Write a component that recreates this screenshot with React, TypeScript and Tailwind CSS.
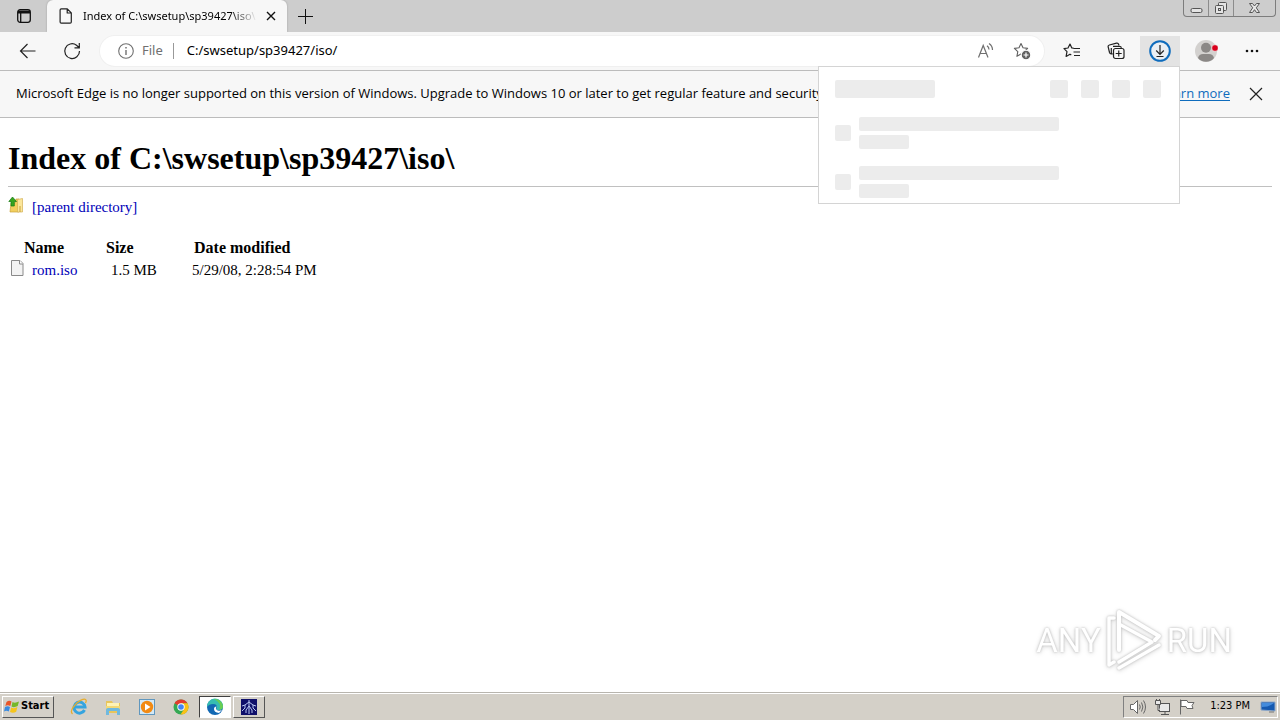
import type { ReactNode } from "react";

function ToolButton({ label, children, className = "" }: { label: string; children: ReactNode; className?: string }) {
  return (
    <button type="button" aria-label={label} className={`flex h-[30px] w-10 shrink-0 items-center justify-center ${className}`}>
      {children}
    </button>
  );
}

function WindowControls() {
  return (
    <div className="mr-1 flex h-[17px] rounded-b-sm border border-t-0 border-[#7d7d7d] text-[#555]">
      <button type="button" aria-label="Minimize" className="flex w-[25px] items-center justify-center border-r border-[#8c8c8c]">
        <svg width="13" height="16" viewBox="0 0 13 16" fill="#e4e4e4" stroke="currentColor">
          <rect x="1" y="8.5" width="11" height="4" rx="1.5" />
        </svg>
      </button>
      <button type="button" aria-label="Restore" className="flex w-[25px] items-center justify-center border-r border-[#8c8c8c]">
        <svg width="14" height="16" viewBox="0 0 14 16" fill="#e4e4e4" stroke="currentColor">
          <rect x="4.5" y="2.5" width="8" height="8" rx="1" />
          <rect x="1.5" y="5.5" width="8" height="8" rx="1" />
          <rect x="4.5" y="8.5" width="2" height="2" />
        </svg>
      </button>
      <button type="button" aria-label="Close window" className="flex w-[41px] items-center justify-center">
        <svg width="13" height="16" viewBox="0 0 13 16" fill="#e8e8e8" stroke="currentColor">
          <path d="M1.5 3.5h3l2 2.5 2-2.5h3l-3.200 4.300 3.200 4.700h-3l-2-2.800-2 2.800h-3l3.200-4.700z" strokeLinejoin="round" />
        </svg>
      </button>
    </div>
  );
}

function TabStrip() {
  return (
    <div className="flex h-8 bg-[#cdcdcd]">
      <button type="button" aria-label="Tab actions" className="flex w-[47px] items-center justify-center">
        <svg width="16" height="16" viewBox="0 0 16 16" fill="none" stroke="#111" strokeWidth="1.300">
          <rect x="1.700" y="1.700" width="12.600" height="12.600" rx="2.500" />
          <path d="M2 3.500h12M2 4.400h12" strokeWidth="2.200" />
          <path d="M4.700 5v9" />
        </svg>
      </button>
      <div className="flex w-60 items-center rounded-t-md bg-[#f7f7f7] pl-3 shadow-[0_0_2px_#999]">
        <svg width="14" height="16" viewBox="0 0 14 16" fill="none" stroke="#222" strokeWidth="1.200" strokeLinejoin="round">
          <path d="M2.300.8h6l4 4v9.200a1.200 1.200 0 0 1-1.200 1.200H2.300a1.200 1.200 0 0 1-1.200-1.200V2A1.200 1.200 0 0 1 2.300.8zM8.200 1v4h4" />
        </svg>
        <span className="ml-2.5 w-[174px] overflow-hidden whitespace-nowrap text-[11px] [mask-image:linear-gradient(to_right,black_85%,transparent)]">
          Index of C:\swsetup\sp39427\iso\
        </span>
        <button type="button" aria-label="Close tab" className="ml-1 flex size-5 items-center justify-center">
          <svg width="10" height="10" viewBox="0 0 10 10" stroke="#111" strokeWidth="1.400"><path d="M1 1l8 8M9 1l-8 8" /></svg>
        </button>
      </div>
      <button type="button" aria-label="New tab" className="flex w-9 items-center justify-center">
        <svg width="15" height="15" viewBox="0 0 15 15" stroke="#111" strokeWidth="1"><path d="M7.500 0v15M0 7.500h15" /></svg>
      </button>
      <div className="flex-1" />
      <WindowControls />
    </div>
  );
}

function PlaceholderRow() {
  return (
    <div className="flex h-[49px] gap-2">
      <div className="mt-2 size-4 rounded-xs bg-[#ececec]" />
      <div className="flex flex-col gap-1">
        <div className="h-3.5 w-[200px] rounded-xs bg-[#ececec]" />
        <div className="h-3.5 w-[50px] rounded-xs bg-[#ececec]" />
      </div>
    </div>
  );
}

function DownloadsFlyout() {
  return (
    <div className="absolute right-0 top-full z-10 h-[138px] w-[362px] overflow-hidden border border-[#d4d4d4] bg-white px-4 pt-[13px]">
      <div className="flex pr-0.5">
        <div className="h-[18px] w-[100px] rounded-xs bg-[#ececec]" />
        <div className="ml-auto flex gap-[13px]">
          {[0, 1, 2, 3].map((i) => <div key={i} className="size-[18px] rounded-xs bg-[#ececec]" />)}
        </div>
      </div>
      <div className="mt-[19px]">
        <PlaceholderRow />
        <PlaceholderRow />
      </div>
    </div>
  );
}

const star = "M8 1.500l2 4.300 4.600.6-3.400 3.200.9 4.700L8 12l-4.100 2.300.9-4.700L1.400 6.400 6 5.800z";

function Toolbar() {
  return (
    <div className="flex h-[38px] bg-[#f7f7f7] px-2 pt-1">
      <ToolButton label="Back">
        <svg width="18" height="16" viewBox="0 0 18 16" fill="none" stroke="#222" strokeWidth="1.200"><path d="M16.500 8H1.500M8.500 1L1.500 8l7 7" /></svg>
      </ToolButton>
      <ToolButton label="Refresh" className="ml-1">
        <svg width="18" height="18" viewBox="0 0 18 18" fill="none" stroke="#222" strokeWidth="1.200"><path d="M16.500 9A7.400 7.400 0 1 1 13.500 3.200L16 5.500M16.300 1v4.800h-4.800" /></svg>
      </ToolButton>
      <div className="ml-2 flex h-[30px] min-w-0 flex-1 items-center rounded-full bg-white pl-[18px] pr-2.5 ring-1 ring-[#f0f0f0]">
        <svg width="16" height="16" viewBox="0 0 16 16" fill="none" stroke="#707070" strokeWidth="1.100">
          <circle cx="8" cy="8" r="7.300" /><path d="M8 7v5" strokeWidth="1.400" /><path d="M8 4v1.500" strokeWidth="1.500" />
        </svg>
        <label htmlFor="address" className="ml-2 text-[13px] text-[#707070]">File</label>
        <div className="ml-2.5 h-4 w-px bg-[#999]" />
        <input id="address" type="text" defaultValue="C:/swsetup/sp39427/iso/" className="ml-[13px] min-w-0 flex-1 bg-transparent text-[13px] outline-none" />
        <button type="button" aria-label="Read aloud" className="flex w-6 justify-center">
          <svg width="18" height="18" viewBox="0 0 18 18" fill="none" stroke="#707070" strokeWidth="1.200">
            <path d="M1.500 15.500l4.700-12 4.800 12M3 11.500h6.500M10 3.800q2 1.400 2 3.700M12 1.500q3.500 2.300 3.500 6.500" />
          </svg>
        </button>
        <button type="button" aria-label="Add to favorites" className="ml-3 flex w-6 justify-center">
          <svg width="18" height="18" viewBox="0 0 18 18" fill="none" stroke="#606060" strokeWidth="1.100">
            <path d={star} strokeLinejoin="round" />
            <circle cx="13" cy="13" r="4.800" fill="#606060" stroke="#fff" />
            <path d="M13 10.500v5M10.500 13h5" stroke="#fff" strokeWidth="1.200" />
          </svg>
        </button>
      </div>
      <ToolButton label="Favorites" className="ml-2">
        <svg width="18" height="18" viewBox="0 0 18 18" fill="none" stroke="#222" strokeWidth="1.200" strokeLinejoin="round">
          <path d="M10.500 6.200L8.800 5.900 7 2 5 6 1 6.600l3 3-.9 4.800 3.900-2.200 1.300.8M10.500 6.500H17M10.500 10H17M11 13.500h6" />
        </svg>
      </ToolButton>
      <ToolButton label="Collections" className="ml-1">
        <svg width="18" height="18" viewBox="0 0 18 18" fill="none" stroke="#222" strokeWidth="1.200">
          <rect x="6.500" y="6.500" width="10.500" height="10" rx="2" fill="#f7f7f7" />
          <path d="M11.750 8.500v6M8.700 11.500h6M4.500 11.800Q3 12 2.500 10.500L1.200 5Q.8 3.400 2.400 3l7.100-1.900q1.600-.4 2.100 1.200l.3 1M4.300 6v4.500q0 1.500 1.500 1.500M6 4.300h6.500q1.500 0 2 1.500" />
        </svg>
      </ToolButton>
      <div className="relative ml-1 h-[30px]">
        <ToolButton label="Downloads" className="bg-[#e3e3e3]">
          <svg width="22" height="22" viewBox="0 0 22 22" fill="none" stroke="#222" strokeWidth="1.200">
            <circle cx="11" cy="11" r="9.800" fill="#eaeff4" stroke="#0f6cbd" strokeWidth="2" />
            <path d="M11 5v9M7.200 10.500L11 14.300l3.800-3.800M7.500 16.500h7" />
          </svg>
        </ToolButton>
        <DownloadsFlyout />
      </div>
      <ToolButton label="Profile" className="ml-1.5">
        <svg width="24" height="24" viewBox="0 0 24 24">
          <circle cx="12" cy="12" r="11" fill="#d3d1cf" />
          <circle cx="12" cy="8.800" r="5" fill="#8b8886" />
          <path d="M4 19q1-4 5-4h6q4 0 5 4-3 3.800-8 3.800T4 19z" fill="#8b8886" />
          <circle cx="21" cy="9" r="3.300" fill="#d9001b" stroke="#f7f7f7" strokeWidth=".6" />
        </svg>
      </ToolButton>
      <ToolButton label="Settings and more" className="ml-1.5">
        <svg width="16" height="4" viewBox="0 0 16 4" fill="#111"><circle cx="3" cy="2" r="1.300" /><circle cx="8" cy="2" r="1.300" /><circle cx="13" cy="2" r="1.300" /></svg>
      </ToolButton>
    </div>
  );
}

function Banner() {
  return (
    <div className="flex h-12 items-center border-y border-[#bcbcbc] bg-[#f7f7f7] px-4 font-['Open_Sans',sans-serif] text-[13px]">
      <p className="whitespace-nowrap">
        Microsoft Edge is no longer supported on this version of Windows. Upgrade to Windows 10 or later to get regular feature and security updates
      </p>
      <a href="#learn" className="ml-auto text-[#0f6cbd] underline underline-offset-2">Learn more</a>
      <button type="button" aria-label="Dismiss" className="ml-[18px] flex w-4 justify-center">
        <svg width="14" height="14" viewBox="0 0 14 14" stroke="#222" strokeWidth="1.200"><path d="M1 1l12 12M13 1L1 13" /></svg>
      </button>
    </div>
  );
}

function Listing() {
  return (
    <main className="flex-1 px-2 pt-[22px] font-['Liberation_Serif',serif] text-[15px] text-black">
      <h1 className="text-[32px] font-bold leading-9">Index of C:\swsetup\sp39427\iso\</h1>
      <hr className="mt-2.5 border-[#c0c0c0]" />
      <a href="#parent" className="mt-2.5 flex h-5 items-center gap-2 text-[#0000b8]">
        <svg className="mb-1" width="16" height="18" viewBox="0 0 16 18">
          <path d="M3 7h4l1-4h3v13H2z" fill="#f2cf5e" stroke="#c9a23b" strokeWidth=".7" />
          <path d="M9.500 3.500l5-1V16h-5z" fill="#fbe69a" stroke="#d3b055" strokeWidth=".7" />
          <path d="M12 10v6" stroke="#c9a23b" />
          <path d="M4.500 1l4 4.500H6.300V10H3V5.500H.8z" fill="#35a51f" stroke="#157811" strokeWidth=".7" />
        </svg>
        [parent directory]
      </a>
      <table className="mt-5 border-collapse text-left leading-[22px]">
        <thead>
          <tr className="text-base leading-[22px]">
            <th className="w-[98px] pl-4">Name</th>
            <th className="w-[86px]">Size</th>
            <th className="pl-0.5">Date modified</th>
          </tr>
        </thead>
        <tbody>
          <tr>
            <td>
              <a href="#rom" className="flex items-center gap-2 text-[#0000b8]">
                <svg className="mb-1" width="16" height="16" viewBox="0 0 16 16">
                  <path d="M3.500.5H12l3 3v12H3.500z" fill="#f3f3f3" stroke="#8a8a8a" /><path d="M11.500.5v3.500H15" fill="#fff" stroke="#8a8a8a" />
                </svg>
                rom.iso
              </a>
            </td>
            <td className="pl-[5px]">1.5 MB</td>
            <td>5/29/08, 2:28:54 PM</td>
          </tr>
        </tbody>
      </table>
    </main>
  );
}

function Watermark() {
  return (
    <div className="absolute bottom-12 right-12 flex items-center gap-1 font-[Roboto,sans-serif] text-[33px] leading-none text-white [filter:drop-shadow(0_0_1px_#bbb)_drop-shadow(0_1px_2px_#ddd)]">
      <span>ANY</span>
      <svg width="58" height="64" viewBox="0 0 58 64" fill="none" stroke="#fff" strokeWidth="4" strokeLinejoin="round" strokeLinecap="round">
        <path d="M14 42V4l40 24-4 4" />
        <path d="M9 10H4v47l5-3M14 16l33 18L14 54M14 60l40-23" strokeWidth="3.500" />
      </svg>
      <span>RUN</span>
    </div>
  );
}

const raised = "border border-t-white border-l-white border-b-[#555] border-r-[#555] bg-[#d4d0c8]";

function Task({ label, children, className = "" }: { label: string; children: ReactNode; className?: string }) {
  return (
    <button type="button" aria-label={label} className={`flex h-[22px] w-8 items-center justify-center ${className}`}>
      {children}
    </button>
  );
}

function Taskbar() {
  return (
    <footer className="flex h-7 items-center border-t border-[#b8b5ae] bg-[#d4d0c8] pl-0.5 pr-0.5 shadow-[inset_0_1px_white]">
      <button type="button" className={`flex h-[22px] w-[52px] items-center gap-px pl-px font-['DejaVu_Sans_Condensed','DejaVu_Sans',sans-serif] text-[11px] font-bold ${raised}`}>
        <svg width="16" height="16" viewBox="0 0 16 16">
          <path d="M2.500 3q2.500-2 5-.5L6.300 7q-2.500-1.500-5 0z" fill="#e8562a" />
          <path d="M8.500 3q2.500 1.500 6.500-.5L13.700 7q-3.500 2-6.200.5z" fill="#76b82a" />
          <path d="M1 8q2.700-1.500 5 0l-1.200 4.500q-2.500-1.500-4.800 0z" fill="#3a8be0" />
          <path d="M7.200 8.500q3 1.500 6.200-.5l-1.200 4.700q-3 2-6.200.3z" fill="#f6c51c" />
        </svg>
        Start
      </button>
      <div className="ml-[9px] flex gap-0.5">
        <Task label="Internet Explorer">
          <svg width="18" height="18" viewBox="0 0 18 18" fill="none">
            <path d="M14.500 12A5.500 5.500 0 1 1 15 9H5" stroke="#35a4df" strokeWidth="3" />
            <path d="M2.500 16C-1 13 5 5 11 2.200c5-2.400 6 0 4.500 2.800" stroke="#e7ad2b" strokeWidth="1.300" />
          </svg>
        </Task>
        <Task label="Windows Explorer">
          <svg width="18" height="18" viewBox="0 0 18 18">
            <path d="M2 3h6l1 2h7v10H2z" fill="#e8c55b" /><path d="M3 5h12v5H3z" fill="#fff3b5" />
            <path d="M2 8h14v3H2z" fill="#f3d976" /><path d="M2 17v-5q0-2 2-2h10q2 0 2 2v5h-3v-4H5v4z" fill="#70b9df" />
          </svg>
        </Task>
        <Task label="Media Player">
          <svg width="18" height="18" viewBox="0 0 18 18">
            <rect x="1.500" y="1.500" width="15" height="15" fill="#d3e9f7" stroke="#6097be" />
            <circle cx="9" cy="9" r="6.200" fill="#f28a13" /><path d="M7 5.500v7L12.500 9z" fill="#fff" />
          </svg>
        </Task>
        <Task label="Chrome">
          <svg width="16" height="16" viewBox="0 0 16 16">
            <circle cx="8" cy="8" r="7.500" fill="#35a853" />
            <path d="M8 8L1.500 4.200A7.500 7.500 0 0 1 14.500 4.300H8z" fill="#e33b2e" />
            <path d="M8 4.300h6.500A7.500 7.500 0 0 1 7.500 15.500L11.200 10z" fill="#fbc116" />
            <circle cx="8" cy="8" r="3.700" fill="#fff" /><circle cx="8" cy="8" r="2.800" fill="#4285f4" />
          </svg>
        </Task>
        <Task label="Edge" className="border border-b-white border-l-[#404040] border-r-white border-t-[#404040] bg-white">
          <svg width="18" height="18" viewBox="0 0 18 18">
            <circle cx="9" cy="9" r="8" fill="#1268b3" />
            <path d="M1 9A8 8 0 0 1 17 8q.3 4-4.500 4-2.500 0-2-1.500Q12 6 7 6 3 6 1 9z" fill="#36bdb1" />
            <path d="M8 1.100A8 8 0 0 1 17 8q0 3.500-3.500 3.800Q16 5 8 1.100z" fill="#68ce55" />
            <path d="M10.500 8.500q-1.500 1.500 0 3.300 2 1.500 5.500.3l-3 2.900q-5-.5-5-4 0-2.500 2.500-2.500z" fill="#fff" />
          </svg>
        </Task>
        <Task label="Network tool" className={raised}>
          <svg width="16" height="16" viewBox="0 0 16 16" fill="none" stroke="#b9c7f3">
            <rect width="16" height="16" fill="#10106a" stroke="none" />
            <path d="M8 1v14M8 3L4 6v3l-3 3M8 3l4 3v3l3 3M8 7l-3 4v3M8 7l3 4v3M4 6L1 7M12 6l3 1" />
          </svg>
        </Task>
      </div>
      <div className="ml-auto flex h-[22px] items-center border border-b-white border-l-[#808080] border-r-white border-t-[#808080] pl-1 pr-px">
        <svg width="20" height="18" viewBox="0 0 20 18" fill="none" stroke="#666">
          <path d="M2.500 6.500h3l4-4v13l-4-4h-3z" fill="#fff" /><path d="M11.500 6.500q1.500 2.500 0 5M13.500 4.500q2.800 4.500 0 9M15.500 2.500q4 6.500 0 13" />
        </svg>
        <svg className="ml-1.5" width="18" height="18" viewBox="0 0 18 18" fill="#e9e9e9" stroke="#555">
          <rect x="5.500" y="5.500" width="10" height="8" /><path d="M7 16.500h8M11 13.500v3M1.500 2.500h5v4h-5zM2.500 1v1.500M5.500 1v1.500M4 6.500v6h2" />
        </svg>
        <svg className="ml-1.5" width="18" height="18" viewBox="0 0 18 18" fill="#fff" stroke="#666">
          <path d="M2.500 1.500v15M3 2.500h6l1 2h6l-2 3 1 3H9l-1-2H3z" />
        </svg>
        <time className="ml-3.5 font-['DejaVu_Sans_Condensed','DejaVu_Sans',sans-serif] text-[11px]">1:23 PM</time>
        <svg className="ml-2.5" width="16" height="16" viewBox="0 0 16 16">
          <path d="M1 3h14v9l-14-1z" fill="#1559b0" stroke="#8ea8c8" /><path d="M2 4h12q-5 4-12 4z" fill="#438bdc" /><path d="M9 13h5" stroke="#777" />
        </svg>
      </div>
    </footer>
  );
}

export default function App() {
  return (
    <div className="relative flex min-h-screen flex-col overflow-hidden bg-white font-['Noto_Sans',sans-serif] text-black">
      <TabStrip />
      <Toolbar />
      <Banner />
      <Listing />
      <Watermark />
      <Taskbar />
    </div>
  );
}
